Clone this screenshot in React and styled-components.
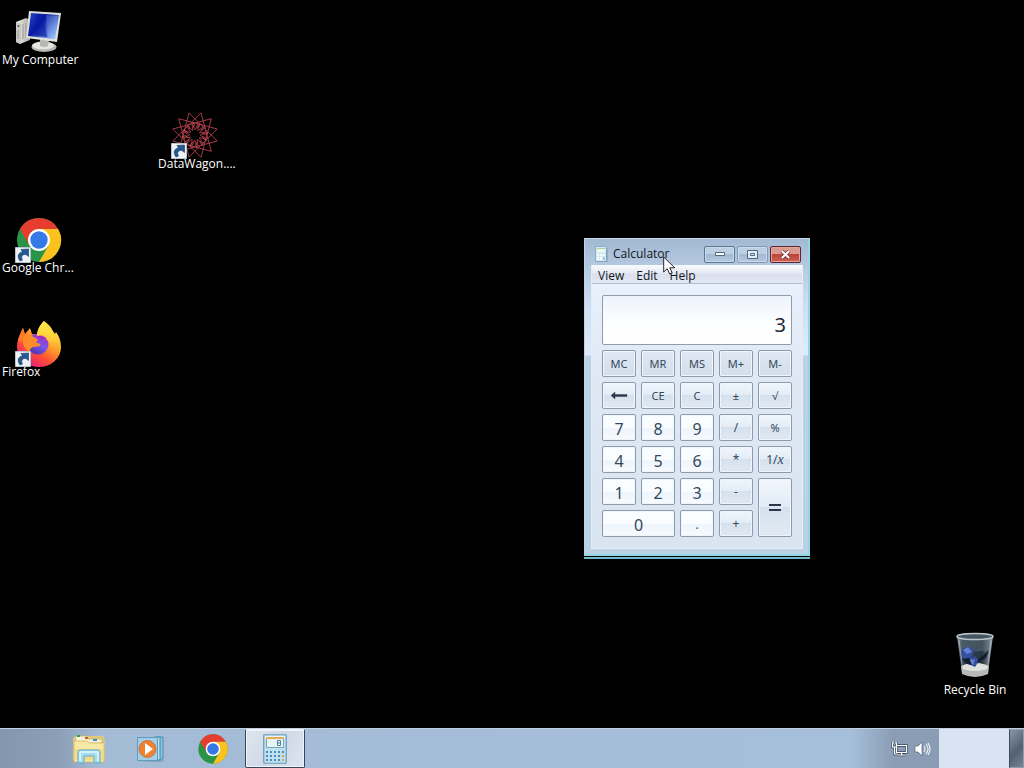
import React from "react";
import styled, { createGlobalStyle } from "styled-components";

const GlobalStyle = createGlobalStyle`
  * { box-sizing: border-box; }
  body { margin: 0; background: #000; overflow: hidden; }
  body, button, input { font-family: "Noto Sans", "Open Sans", sans-serif; font-size: 12px; }
  svg { display: block; }
`;

const Screen = styled.div`
  min-height: 100vh;
  display: flex;
  flex-direction: column;
  background: #000;
`;

const Desktop = styled.main`
  flex: 1;
  position: relative;
`;

const Shortcut = styled.button`
  position: absolute;
  top: ${(p) => p.$top};
  left: ${(p) => p.$left};
  right: ${(p) => p.$right};
  bottom: ${(p) => p.$bottom};
  width: 78px;
  padding: 0 2px;
  border: 0;
  background: none;
  color: #fff;
  font-family: "Open Sans", sans-serif;
  line-height: 16px;
  text-align: ${(p) => p.$align || "center"};
  white-space: nowrap;
`;

const ShortcutArt = styled.span`
  display: block;
  position: relative;
  width: 48px;
  height: 44px;
  margin: 0 auto;
`;

const Badge = styled.span`
  position: absolute;
  left: 0;
  top: 31px;
`;

const Window = styled.section`
  position: absolute;
  left: 584px;
  top: 238px;
  width: 226px;
  padding: 0 6px 6px;
  border: 1px solid #9bd3e2;
  border-top-color: #c9dbe9;
  border-left-color: #b9d5e6;
  background:
    linear-gradient(#a2b9d3, #b4c8df 26px, #ccdcf0 60px, #e0ebfa 116px, transparent 117px),
    #bcd0e6;
  box-shadow: inset -1px -1px #86dbe8, 0 1px #000, 0 3px #74b9c9;
  color: #101820;
`;

const TitleBar = styled.header`
  height: 26px;
  display: flex;
  align-items: center;
  padding: 4px 2px 0 4px;
`;

const Title = styled.h1`
  flex: 1;
  margin: 0 0 0 5px;
  font-family: "Open Sans", sans-serif;
  font-size: 12px;
  font-weight: 400;
  line-height: 16px;
`;

const WindowControls = styled.div`
  display: flex;
  gap: 2px;
`;

const ControlButton = styled.button`
  width: 31px;
  height: 17px;
  padding: 0;
  display: grid;
  place-items: center;
  border: 1px solid ${(p) => (p.$close ? "#5b2533" : p.$dim ? "#8399b5" : "#60758f")};
  border-radius: 2px;
  box-shadow: inset 0 0 0 1px ${(p) => (p.$close ? "#e3a49d" : "#c9daeb")};
  background: ${(p) =>
    p.$close
      ? "linear-gradient(#d99a91 0 45%, #bd4436 50%, #c96455)"
      : "linear-gradient(#bccfe3 0 45%, #a3bad3 50%, #b3c9df)"};
`;

const Client = styled.div`
  border: 1px solid #e3edf8;
  border-top: 0;
  background: linear-gradient(#eaf2fd, #dfe8f3 110px, #d9e4f1);
`;

const MenuBar = styled.nav`
  height: 19px;
  display: flex;
  border-bottom: 1px solid #b3bfd0;
  background: linear-gradient(#fafbfe, #e6e9f4 45%, #dadfee 50%, #e4e8f4);
`;

const MenuItem = styled.button`
  padding: 2px 6px 0;
  border: 0;
  background: none;
  color: #101820;
  font-family: "Open Sans", sans-serif;
  line-height: 18px;
`;

const CalculatorBody = styled.div`
  padding: 11px 10px;
`;

const Display = styled.input`
  display: block;
  width: 100%;
  height: 50px;
  margin-bottom: 5px;
  padding: 8px 5px 0;
  border: 1px solid #8e9caf;
  border-radius: 2px;
  outline: 0;
  background: linear-gradient(#eef3fc, #fdfeff 60%, #fff);
  color: #1e2a36;
  text-align: right;
  font-size: 20px;
`;

const Keypad = styled.div`
  display: grid;
  grid-template-columns: repeat(5, 1fr);
  grid-auto-rows: 27px;
  gap: 5px;
`;

const keyFills = {
  memory: "linear-gradient(#dfe8f3, #d3deeb)",
  digit: "linear-gradient(#fafdff 0 50%, #edf4fc 55%, #f8fcff)",
  operator: "linear-gradient(#f0f6fc, #e3ecf6 48%, #d5e1ed 50%, #e0eaf4)",
};

const Key = styled.button`
  grid-column: span ${(p) => p.$cols || 1};
  grid-row: span ${(p) => p.$rows || 1};
  min-width: 0;
  padding: ${(p) => (p.$kind === "digit" ? "2px 0 0" : "0")};
  display: grid;
  place-items: center;
  border: 1px solid #8b9bb0;
  border-radius: 2px;
  box-shadow: inset 0 0 0 1px #f0f5fb;
  background: ${(p) => keyFills[p.$kind]};
  color: #34475b;
  font-size: ${(p) => (p.$kind === "digit" ? "16px" : "11px")};
`;

const SignText = styled.span`
  font-size: 12px;
`;

const ReciprocalText = styled.span`
  font-size: 12px;
  i { font-family: "Liberation Serif", serif; font-size: 14px; }
`;

const Pointer = styled.span`
  position: absolute;
  left: 663px;
  top: 256px;
`;

const Taskbar = styled.footer`
  height: 40px;
  display: flex;
  border-top: 1px solid #c0d0e0;
  background: linear-gradient(90deg, #8496ad, #8c9fb7 60px, #a4bbd6 100px, #a6bfdb);
`;

const TaskList = styled.div`
  flex: 1;
  display: flex;
  gap: 2px;
  padding-left: 59px;
`;

const TaskButton = styled.button`
  width: 60px;
  padding: 0;
  display: grid;
  place-items: center;
  border: 1px solid ${(p) => (p.$active ? "#35465b" : "transparent")};
  border-top-color: ${(p) => (p.$active ? "#eef4fa" : "transparent")};
  border-radius: 2px;
  background: ${(p) => (p.$active ? "linear-gradient(120deg, #e0e6ef, #ced8e5 50%, #dce5f0)" : "none")};
  box-shadow: ${(p) => (p.$active ? "inset 0 0 0 1px #edf3f9" : "none")};
`;

const Tray = styled.div`
  display: flex;
  align-items: center;
  gap: 6px;
  padding: 1px 8px 0 40px;
  background: linear-gradient(90deg, #a6bfdb, #8b9db4 42px);
`;

const TrayButton = styled.button`
  padding: 0;
  border: 0;
  background: none;
`;

const ClockArea = styled.div`
  width: 70px;
  background: #d8e4f1;
`;

const ShowDesktop = styled.button`
  width: 15px;
  border: 1px solid #8f9eaf;
  border-left-color: #3e4c5c;
  background: linear-gradient(135deg, #8795a5, #536273 55%, #748496);
`;

function ArrowBadge() {
  return (
    <Badge>
      <svg width="16" height="16" viewBox="0 0 16 16" aria-hidden="true">
        <path d="M.5.5h15v15H.5z" fill="#edf3f7" stroke="#b7c5d0" />
        <path d="M5 14C1.500 9 3.500 5.500 7.500 5L6 2.500 13.500 2v7.500l-2.500-2C7.500 7 5.500 9.500 7.500 13z" fill="#245a91" stroke="#17375e" strokeWidth=".6" />
      </svg>
    </Badge>
  );
}

function ComputerIcon() {
  return (
    <svg width="48" height="48" viewBox="0 0 48 48" aria-hidden="true">
      <defs>
        <linearGradient id="screenBlue" x1="0" y1="0" x2="1" y2=".7">
          <stop stopColor="#2547c5" /><stop offset=".45" stopColor="#0718a2" /><stop offset="1" stopColor="#8db7f5" />
        </linearGradient>
        <linearGradient id="metal"><stop stopColor="#f3f3ee" /><stop offset="1" stopColor="#aaa9a6" /></linearGradient>
      </defs>
      <path d="m1 14 10-4 4 2v20L5 36l-4-2z" fill="url(#metal)" />
      <path d="m1 14 5 2v20l-5-2z" fill="#c9c9c5" />
      <circle cx="3.500" cy="18" r="1" fill="#555" /><path d="M3 22v9m5-15v15m3-16v15" stroke="#999" />
      <ellipse cx="29" cy="39" rx="12.500" ry="5" fill="#b5b5b1" />
      <ellipse cx="28" cy="37.500" rx="11" ry="4" fill="#e5e5e1" />
      <path d="m25 30 9 2-1 6q-4 2-8 0z" fill="#b6b6b3" />
      <path d="m14 3 32 2-4 29-31-4z" fill="#e1e1db" />
      <path d="m16 5 28 2-4 24-27-3z" fill="url(#screenBlue)" />
      <path d="m21 6 7 1 4 22-12-2z" fill="#0717a0" opacity=".55" />
      <path d="m31 7 12 1-3 22-7-1z" fill="#a4c9ff" opacity=".25" />
    </svg>
  );
}

function WagonIcon() {
  const point = (deg, r) => {
    const a = (deg * Math.PI) / 180;
    return `${(24 + r * Math.sin(a)).toFixed(1)} ${(23 - r * Math.cos(a)).toFixed(1)}`;
  };
  const turns = Array.from({ length: 12 }, (_, i) => i * 30 + 15);
  return (
    <svg width="48" height="48" viewBox="0 0 48 48" fill="none" stroke="#b8404c" aria-hidden="true">
      {turns.map((a) => (
        <g key={a}>
          <path d={`M${point(a, 23)}L${point(a + 120, 23)}`} strokeWidth=".9" />
          <path d={`M${point(a, 12)}L${point(a + 20, 5)}L${point(a + 30, 12)}`} stroke="#963642" />
          <path d={`M${point(a + 8, 13)}Q${point(a + 16, 8)} ${point(a + 2, 8)}`} stroke="#d05058" />
        </g>
      ))}
    </svg>
  );
}

function ChromeIcon({ size }) {
  return (
    <svg width={size} height={size} viewBox="0 0 48 48" aria-hidden="true">
      <circle cx="24" cy="24" r="22" fill="#299447" />
      <path d="M4.900 13a22 22 0 0 1 38.200 0H24L14.500 29.500z" fill="#e53e30" />
      <path d="M43.100 13A22 22 0 0 1 24 46l9.500-16.500L24 13z" fill="#fbc21d" />
      <circle cx="24" cy="24" r="11" fill="#fff" /><circle cx="24" cy="24" r="8.700" fill="#3579e5" />
    </svg>
  );
}

function FirefoxIcon() {
  return (
    <svg width="48" height="48" viewBox="0 0 48 48" aria-hidden="true">
      <defs>
        <linearGradient id="fire" x1=".85" y1=".05" x2=".25" y2=".95"><stop stopColor="#fff44a" /><stop offset=".4" stopColor="#ffa728" /><stop offset=".7" stopColor="#ff5035" /><stop offset="1" stopColor="#e61c78" /></linearGradient>
        <linearGradient id="globe" x1=".8" y1="0" x2=".2" y2="1"><stop stopColor="#b52bbb" /><stop offset=".5" stopColor="#7655ec" /><stop offset="1" stopColor="#4b31a0" /></linearGradient>
        <linearGradient id="flame" x1="0" y1="0" x2="0" y2="1"><stop stopColor="#fff04a" /><stop offset=".5" stopColor="#ffc837" /><stop offset="1" stopColor="#ff7139" stopOpacity="0" /></linearGradient>
      </defs>
      <path d="M29 1q6 4 9 10l2 3 1-2c3 4 5 9 5 15a22 20 0 0 1-44 0C2 20 5 14 8 8l2 6 5-6 2 6q3 0 5 2c0-6 3-11 7-15z" fill="url(#fire)" />
      <circle cx="23" cy="24" r="10.500" fill="url(#globe)" />
      <path d="M8 16c5-2 11 0 15 4l-2 3c4 0 5 1 4 3l-6 1c-3 0-4 3-5 5-5-3-7-9-6-16z" fill="#ff8b2b" />
      <path d="M22 16c0-6 3-11 7-15 1 8 13 11 14 22q0 10-8 16 3-12-2-18-3-4-11-5z" fill="url(#flame)" />
      <path d="M22 16q6-2 10 3-5-1-7 0z" fill="#a92bc1" />
      <path d="M3 20q2-6 5-12l2 7-4 7z" fill="#ff7a24" />
    </svg>
  );
}

function BinIcon() {
  return (
    <svg width="48" height="48" viewBox="0 0 48 48" aria-hidden="true">
      <defs><linearGradient id="glass"><stop stopColor="#9ba6b0" /><stop offset=".15" stopColor="#35444e" /><stop offset=".7" stopColor="#263640" /><stop offset="1" stopColor="#a0abb2" /></linearGradient></defs>
      <path d="m6 4 5 37q13 7 26 0l5-37z" fill="url(#glass)" />
      <path d="m9 6 1 12q14 3 28 0l1-12z" fill="#657783" opacity=".45" />
      <path d="m10 34 1 8q13 6 26 0l1-8q-14-5-28 0" fill="#b7b9b9" />
      <ellipse cx="24" cy="35" rx="13" ry="4" fill="#e0e1df" />
      <path d="m10 18 7-4 6 4-2 7-8 3-3-5zm7 10 7-4 4 5-4 6-7-3z" fill="#354e9d" />
      <path d="m12 18 5-3 4 5-5 2zm8 9 4 1-2 5-4-3z" fill="#6480d5" />
      <path d="m11 27 7-1 3 7-5-1zm16 1 11-10-3 8-9 5z" fill="#131e31" />
      <ellipse cx="24" cy="4.500" rx="18" ry="3" fill="#475761" stroke="#bcc6cc" strokeWidth="1.500" />
      <path d="m8 8 4 31M40 8l-4 32" stroke="#c1cbd2" opacity=".6" />
    </svg>
  );
}

function CalculatorIcon() {
  return (
    <svg width="24" height="30" viewBox="0 0 24 30" aria-hidden="true">
      <rect x=".75" y=".75" width="22.500" height="28.500" rx="1" fill="#bfe0ee" stroke="#6a9ab8" strokeWidth="1.200" />
      <path d="M2 2h20v3H2z" fill="#e9f5fa" />
      <path d="M3.500 3.500h17v10h-17z" fill="#e4f3f5" stroke="#7ba5b7" />
      <path d="M3 3h18v2H3z" fill="#e3ae53" />
      <path d="M14.500 6.500h3v5h-3zM14.500 9h3" fill="none" stroke="#557f9a" />
      {[0, 1, 2].map((r) => [0, 1, 2, 3, 4].map((c) => (
        <rect key={`${r}-${c}`} x={3 + c * 4} y={17 + r * 4} width="2" height="2" fill={c === 4 && r > 0 ? "#dfa642" : "#4b8db9"} />
      )))}
    </svg>
  );
}

function SmallCalculatorIcon() {
  return (
    <svg width="13" height="16" viewBox="0 0 13 16" aria-hidden="true">
      <path d="M.5.5h11v15H.5z" fill="#d5e9f4" stroke="#8cb0c9" />
      <path d="M2 2h8v4H2z" fill="#eff9ee" /><path d="M2 2h8v1H2z" fill="#a9cf9e" />
      <path d="M2 8h2v2H2zm3 0h2v2H5zm3 0h2v2H8zm-6 3h2v3H2zm3 0h2v3H5z" fill="#f8fcff" />
      <path d="M8 11h2v3H8z" fill="#9fc6dd" />
      <path d="M12 2v14H2" fill="none" stroke="#718aa4" strokeWidth=".7" />
    </svg>
  );
}

function FolderIcon() {
  return (
    <svg width="34" height="30" viewBox="0 0 34 30" aria-hidden="true">
      <path d="M1 4 4 2h27l2 4v20l-2 2H3l-2-2z" fill="#dfca7c" />
      <path d="M4 2h10l2 3h14v4H3z" fill="#f8f3d8" stroke="#c5a955" strokeWidth=".7" />
      <path d="M5 1h3v2H5z" fill="#379c4b" /><path d="M13 3h3v2h-3z" fill="#cc5140" /><path d="M21 5h4v2h-4z" fill="#438dbd" />
      <path d="M2 7h13l2 2h15v19H2z" fill="#f7e9a5" stroke="#cdb35f" strokeWidth=".7" />
      <path d="M3 15h28v11H3z" fill="#ecd575" opacity=".6" />
      <path d="M6 29V18q0-2 2-2h18q2 0 2 2v11h-6v-7H12v7z" fill="#a9dced" stroke="#5ba9cb" />
      <path d="M8 27v-9h18v9" fill="none" stroke="#dff8ff" strokeWidth="1.500" />
    </svg>
  );
}

function MediaIcon() {
  return (
    <svg width="30" height="28" viewBox="0 0 30 28" aria-hidden="true">
      <path d="M21 2h6v22h-6z" fill="#86c4df" stroke="#4b8eb3" /><path d="M18 2h6v23h-6z" fill="#b9e0ee" stroke="#4488ad" />
      <path d="M1.500 2.500h20v23h-20z" fill="#a4cde6" stroke="#5f9cc0" />
      <circle cx="11.500" cy="14" r="8.500" fill="#ed8230" stroke="#bf642e" strokeWidth=".7" />
      <path d="m9 8 8 6-8 6z" fill="#fff" />
      <path d="M22 25h7l-4 2H4z" fill="#6892ae" opacity=".5" />
    </svg>
  );
}

const shortcuts = [
  { label: "My Computer", top: "8px", left: "0", Icon: ComputerIcon },
  { label: "DataWagon....", top: "112px", left: "156px", Icon: WagonIcon, linked: true },
  { label: "Google Chr...", top: "216px", left: "0", Icon: () => <ChromeIcon size={48} />, linked: true, align: "left" },
  { label: "Firefox", top: "320px", left: "0", Icon: FirefoxIcon, linked: true, align: "left" },
  { label: "Recycle Bin", bottom: "30px", right: "10px", Icon: BinIcon },
];

// The bin's picture stands taller above its label than the others.
const TallArt = styled(ShortcutArt)`
  height: 50px;
`;

const backArrow = (
  <svg width="18" height="9" viewBox="0 0 18 9" aria-hidden="true">
    <path d="M1 4.500 5 1v2.500h12v2H5V8z" fill="#28384a" stroke="#28384a" strokeWidth=".4" />
  </svg>
);
const equalsSign = (
  <svg width="12" height="8" viewBox="0 0 12 8" aria-hidden="true">
    <path d="M0 0h12v2H0zM0 5h12v2H0z" fill="#28384a" />
  </svg>
);
const sign = (text) => ({ text: <SignText>{text}</SignText>, kind: "operator" });

const keys = [
  ...["MC", "MR", "MS", "M+", "M-"].map((text) => ({ text, kind: "memory" })),
  { text: backArrow, name: "Backspace", kind: "operator" },
  ...["CE", "C", "±", "√"].map((text) => ({ text, kind: "operator" })),
  ...["7", "8", "9"].map((text) => ({ text, kind: "digit" })),
  sign("/"), { text: "%", kind: "operator" },
  ...["4", "5", "6"].map((text) => ({ text, kind: "digit" })),
  sign("*"),
  { text: <ReciprocalText>1/<i>x</i></ReciprocalText>, name: "Reciprocal", kind: "operator" },
  ...["1", "2", "3"].map((text) => ({ text, kind: "digit" })),
  sign("-"),
  { text: equalsSign, name: "Equals", kind: "operator", rows: 2 },
  { text: "0", kind: "digit", cols: 2 },
  { text: <SignText>.</SignText>, kind: "digit" },
  sign("+"),
];

function Calculator() {
  return (
    <Window>
      <TitleBar>
        <SmallCalculatorIcon />
        <Title>Calculator</Title>
        <WindowControls>
          <ControlButton aria-label="Minimize">
            <svg width="12" height="6"><path d="M1.500 1.500h9v3h-9z" fill="#fff" stroke="#53677f" /></svg>
          </ControlButton>
          <ControlButton $dim aria-label="Maximize">
            <svg width="11" height="9"><path d="M.5.5h10v8H.5zM3.500 3.500h4v2h-4z" fill="#e5eef7" stroke="#506681" /></svg>
          </ControlButton>
          <ControlButton $close aria-label="Close">
            <svg width="11" height="9" viewBox="0 0 12 10"><path d="m2 1 8 8m0-8L2 9" stroke="#6f3038" strokeWidth="4" /><path d="m2 1 8 8m0-8L2 9" stroke="#fff" strokeWidth="2.400" /></svg>
          </ControlButton>
        </WindowControls>
      </TitleBar>
      <Client>
        <MenuBar>
          {["View", "Edit", "Help"].map((item) => <MenuItem key={item}>{item}</MenuItem>)}
        </MenuBar>
        <CalculatorBody>
          <Display aria-label="Result" value="3" readOnly />
          <Keypad>
            {keys.map((key, i) => (
              <Key key={i} $kind={key.kind} $cols={key.cols} $rows={key.rows} aria-label={key.name}>{key.text}</Key>
            ))}
          </Keypad>
        </CalculatorBody>
      </Client>
    </Window>
  );
}

export default function App() {
  return (
    <Screen>
      <GlobalStyle />
      <Desktop>
        {shortcuts.map(({ label, top, left, right, bottom, Icon, linked, align }) => {
          const Art = Icon === BinIcon ? TallArt : ShortcutArt;
          return (
            <Shortcut key={label} $top={top} $left={left} $right={right} $bottom={bottom} $align={align}>
              <Art><Icon />{linked && <ArrowBadge />}</Art>
              {label}
            </Shortcut>
          );
        })}
        <Calculator />
        <Pointer>
          <svg width="13" height="20" viewBox="0 0 13 20" aria-hidden="true">
            <path d="M.7 1v15l3.500-3.300L6.700 18l2.500-1.200-2.400-5h5z" fill="#fff" stroke="#111" strokeWidth=".9" />
          </svg>
        </Pointer>
      </Desktop>
      <Taskbar>
        <TaskList>
          <TaskButton aria-label="File Explorer"><FolderIcon /></TaskButton>
          <TaskButton aria-label="Media Player"><MediaIcon /></TaskButton>
          <TaskButton aria-label="Google Chrome"><ChromeIcon size={32} /></TaskButton>
          <TaskButton $active aria-label="Calculator"><CalculatorIcon /></TaskButton>
        </TaskList>
        <Tray>
          <TrayButton aria-label="Network">
            <svg width="17" height="16" viewBox="0 0 17 16" fill="none" aria-hidden="true">
              <path d="M5.500 4.500h10v7h-10zM10.500 12v2m-4 0h8M1.500 2v4h4V2m-2 4v7h3M2 0v3m3-3v3" stroke="#35465b" strokeWidth="2.400" />
              <path d="M5.500 4.500h10v7h-10zM10.500 12v2m-4 0h8M1.500 2v4h4V2m-2 4v7h3M2 0v3m3-3v3" stroke="#fff" strokeWidth="1.200" />
            </svg>
          </TrayButton>
          <TrayButton aria-label="Volume">
            <svg width="17" height="16" viewBox="0 0 17 16" aria-hidden="true">
              <path d="M1 5h3l4-4v14l-4-4H1z" fill="#fff" stroke="#53677f" strokeWidth=".7" />
              <path d="M10 5q2 3 0 6m2-8q4 5 0 10m2-11q4 6 0 12" fill="none" stroke="#f0f5fa" strokeWidth="1.100" />
            </svg>
          </TrayButton>
        </Tray>
        <ClockArea />
        <ShowDesktop aria-label="Show desktop" />
      </Taskbar>
    </Screen>
  );
}
